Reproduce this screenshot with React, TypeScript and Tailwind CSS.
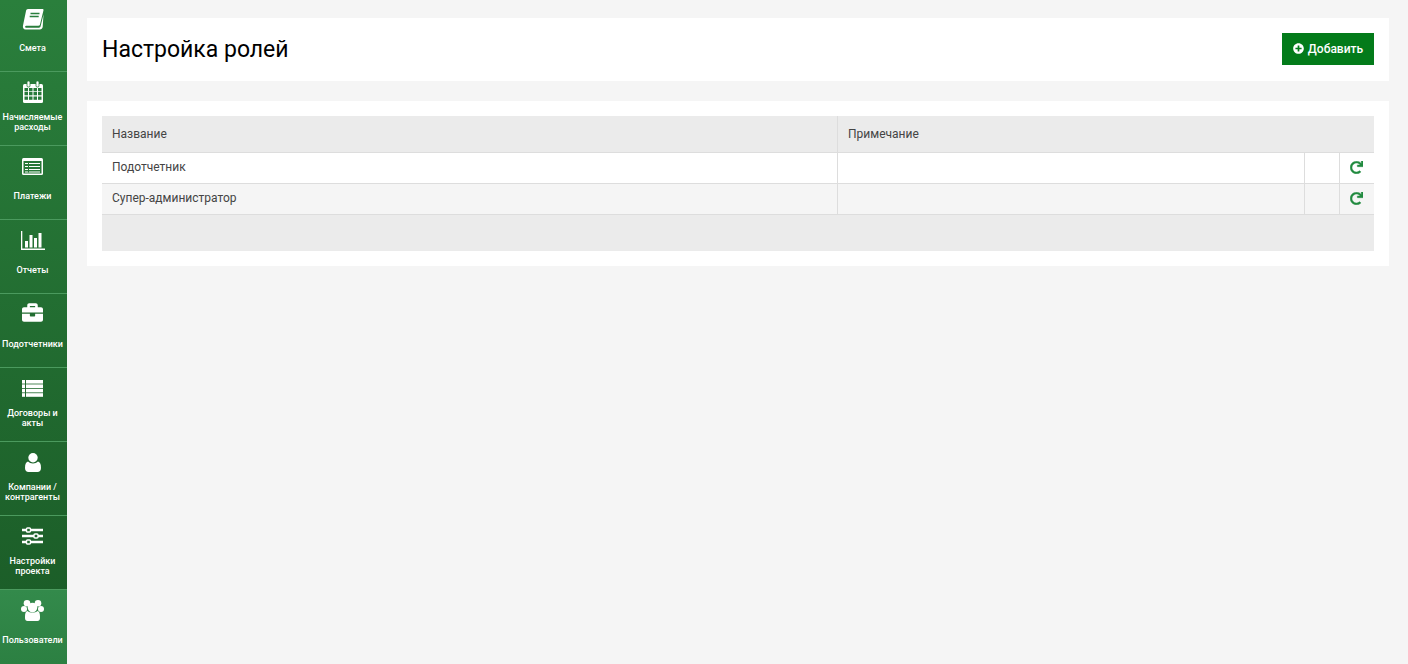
import type { ReactNode } from "react";
import { FaBriefcase, FaPlusCircle, FaRedo } from "react-icons/fa";

interface NavItem {
  label: ReactNode;
  icon: ReactNode;
  active?: boolean;
}

// Icons below are drawn by hand, the old icon font they come from is not in the packages
function BookIcon() {
  return (
    <svg viewBox="0 0 22 22" className="h-[22px] w-[22px]" fill="none">
      <path d="M6 1h14.500c.8 0 1.200.6 1 1.300L18 16.500c-.2.8-.8 1.200-1.500 1.200H4.200c-1.200 0-1.500 1.600-.4 2h13.200c.8 0 1.200-.4 1.500-1.100L21.500 6.500 20.700 19c-.3 1.500-1.400 2.500-2.800 2.500H3.500C1.500 21.500.5 19.500 1 17.500L4 3c.2-1.200 1-2 2-2z" fill="white" />
      <path d="M8.500 5.500h9M7.700 8.500h9" stroke="#2a7f3d" strokeWidth="1.300" />
    </svg>
  );
}

function CalendarIcon() {
  const cols = [2, 6.5, 11, 15.5];
  const rows = [7, 11, 15.5];
  return (
    <svg viewBox="0 0 20 22" className="h-[22px] w-[20px]" fill="none">
      <rect x="0" y="3" width="20" height="19" rx="1.500" fill="white" />
      <rect x="4" y="0" width="3" height="6" rx="1.200" fill="white" stroke="#287a3a" strokeWidth=".8" />
      <rect x="13" y="0" width="3" height="6" rx="1.200" fill="white" stroke="#287a3a" strokeWidth=".8" />
      {rows.map((y) =>
        cols.map((x) => <rect key={`${x}-${y}`} x={x - 0.5} y={y} width="3.500" height="3.300" fill="#287a3a" />),
      )}
    </svg>
  );
}

function ListAltIcon() {
  return (
    <svg viewBox="0 0 21 17" className="h-[17px] w-[21px]" fill="none">
      <rect x="0" y="0" width="21" height="17" rx="1.500" fill="white" />
      <rect x="1.500" y="3" width="18" height="12.500" fill="#287839" />
      <path d="M3 5.500h15M3 8.500h15M3 11.500h15M3 14h15" stroke="white" strokeWidth="1.200" />
      <path d="M6.500 4.500v10" stroke="#287839" strokeWidth="1" />
    </svg>
  );
}

function ChartIcon() {
  return (
    <svg viewBox="0 0 24 19" className="h-[19px] w-[24px]" fill="white">
      <rect x="0" y="0" width="1.300" height="19" />
      <rect x="0" y="17.500" width="24" height="1.500" />
      <rect x="4" y="10" width="3" height="6.500" />
      <rect x="8.500" y="4" width="3" height="12.500" />
      <rect x="13" y="7" width="3" height="9.500" />
      <rect x="17.500" y="2" width="3" height="14.500" />
    </svg>
  );
}

function ListIcon() {
  return (
    <svg viewBox="0 0 21 17" className="h-[17px] w-[21px]" fill="white">
      {[0, 4.4, 8.8, 13.2].map((y) => (
        <g key={y}>
          <rect x="0" y={y} width="3" height="3.600" />
          <rect x="4" y={y} width="17" height="3.600" />
        </g>
      ))}
    </svg>
  );
}

function UserIcon() {
  return (
    <svg viewBox="0 0 16 19" className="h-[19px] w-[16px]" fill="white">
      <circle cx="8" cy="4.700" r="4.700" />
      <path d="M3 8.500c1.200 1.300 3 2 5 2s3.800-.7 5-2c2 .5 3 2.500 3 6.500 0 2.500-1.500 4-3.500 4h-9C1.500 19 0 17.500 0 15c0-4 1-6 3-6.500z" />
    </svg>
  );
}

function SlidersIcon() {
  return (
    <svg viewBox="0 0 21 18" className="h-[18px] w-[21px]" fill="none">
      <path d="M0 3h21M0 9h21M0 15h21" stroke="white" strokeWidth="2.400" />
      <rect x="4.500" y="1" width="4" height="4" rx="1" fill="#1e662c" stroke="white" strokeWidth="1.400" />
      <rect x="12" y="7" width="4" height="4" rx="1" fill="#1e662c" stroke="white" strokeWidth="1.400" />
      <rect x="4.500" y="13" width="4" height="4" rx="1" fill="#1e662c" stroke="white" strokeWidth="1.400" />
    </svg>
  );
}

function UsersIcon() {
  return (
    <svg viewBox="0 0 23 21" className="h-[21px] w-[23px]" fill="white">
      <circle cx="6" cy="3.300" r="3.300" />
      <circle cx="17" cy="3.300" r="3.300" />
      <circle cx="3" cy="9" r="3" />
      <circle cx="20" cy="9" r="3" />
      <circle cx="11.500" cy="7.500" r="4.800" />
      <path d="M6.500 11c1.200 1 3 1.500 5 1.500s3.800-.5 5-1.500c1.500.3 2.500 2 2.500 5.500v1.500c0 1.700-1 3-2.500 3h-10C5 21 4 19.700 4 18v-1.500c0-3.500 1-5.200 2.500-5.500z" />
    </svg>
  );
}

const nav: NavItem[] = [
  { label: "Смета", icon: <BookIcon /> },
  { label: <>Начисляемые<br />расходы</>, icon: <CalendarIcon /> },
  { label: "Платежи", icon: <ListAltIcon /> },
  { label: "Отчеты", icon: <ChartIcon /> },
  { label: "Подотчетники", icon: <FaBriefcase className="h-[21px] w-[21px] -translate-y-[2px]" /> },
  { label: <>Договоры и<br />акты</>, icon: <ListIcon /> },
  { label: <>Компании /<br />контрагенты</>, icon: <UserIcon /> },
  { label: <>Настройки<br />проекта</>, icon: <SlidersIcon /> },
  { label: "Пользователи", icon: <UsersIcon />, active: true },
];

function Sidebar() {
  return (
    <aside className="flex h-[664px] w-[67px] shrink-0 flex-col bg-gradient-to-b from-[#2a7f3c] to-[#1a5a26]">
      {nav.map((item, i) => (
        <div
          key={i}
          className={`flex shrink-0 flex-col items-center pr-[2px] text-white ${i === 0 ? "h-[72px]" : "h-[74px]"} ${
            item.active ? "flex-1 bg-gradient-to-b from-[#338a4b] to-[#2c8042]" : "border-b border-[#4b9a5e]"
          }`}
        >
          <div className={`flex w-full items-center justify-center ${i === 0 ? "h-[38px]" : "h-[40px]"}`}>{item.icon}</div>
          <div className="flex h-[20px] items-center justify-center text-center text-[9px] leading-[10px] font-medium whitespace-nowrap">
            <span>{item.label}</span>
          </div>
        </div>
      ))}
    </aside>
  );
}

function Row({ name, alt }: { name: string; alt?: boolean }) {
  return (
    <div className={`flex h-[31px] border-b border-[#dddddd] text-[12px] text-[#444444] ${alt ? "bg-[#f5f5f5]" : "bg-white"}`}>
      <div className="flex w-[736px] items-center border-r border-[#dddddd] pb-[2px] pl-[10px]">{name}</div>
      <div className="w-[467px] border-r border-[#dddddd]" />
      <div className="w-[35px] border-r border-[#dddddd]" />
      <div className="flex flex-1 items-center justify-center pr-[1px] pb-[2px]">
        <FaRedo className="h-[13px] w-[13px] text-[#218a3f]" stroke="currentColor" strokeWidth={16} />
      </div>
    </div>
  );
}

export default function App() {
  return (
    <div className="flex h-[664px] bg-[#f5f5f5] font-['Roboto',sans-serif]">
      <Sidebar />
      <main className="flex flex-1 flex-col gap-[20px] pt-[18px] pr-[19px] pl-[20px]">
        <div className="flex h-[63px] items-center justify-between bg-white px-[15px]">
          <h1 className="translate-y-[1px] text-[23px] text-black">Настройка ролей</h1>
          <button className="flex h-[32px] w-[92px] -translate-y-[1px] items-center justify-center gap-[4px] bg-[#037b1a] text-[12px] font-medium text-white">
            <FaPlusCircle className="h-[11px] w-[11px]" />
            Добавить
          </button>
        </div>
        <div className="bg-white p-[15px]">
          <div className="flex h-[37px] border-b border-[#dddddd] bg-[#ebebeb] text-[12px] text-[#444444]">
            <div className="flex w-[736px] items-center border-r border-[#dddddd] pl-[10px]">Название</div>
            <div className="flex flex-1 items-center pl-[10px]">Примечание</div>
          </div>
          <Row name="Подотчетник" />
          <Row name="Супер-администратор" alt />
          <div className="h-[36px] bg-[#ebebeb]" />
        </div>
      </main>
    </div>
  );
}
